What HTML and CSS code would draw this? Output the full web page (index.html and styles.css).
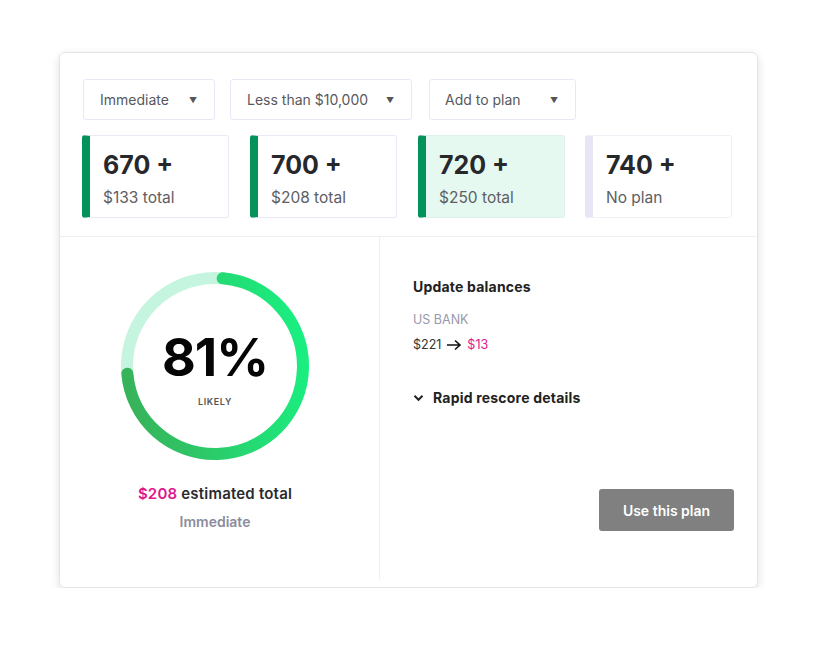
FILE: index.html
```html
<!DOCTYPE html>
<html lang="en">
<head>
	<meta charset="UTF-8">
	<title>Plan</title>
	<link rel="stylesheet" href="styles.css">
</head>
<body>
	<div class="card">
		<div class="top">
			<div class="filters">
				<div class="select select-time">Immediate <span class="caret">&#9660;</span></div>
				<div class="select select-amount">Less than $10,000 <span class="caret">&#9660;</span></div>
				<div class="select select-plan">Add to plan <span class="caret">&#9660;</span></div>
			</div>
			<div class="scores">
				<div class="score">
					<div class="score-num">670 +</div>
					<div class="score-sub">$133 total</div>
				</div>
				<div class="score">
					<div class="score-num">700 +</div>
					<div class="score-sub">$208 total</div>
				</div>
				<div class="score score-active">
					<div class="score-num">720 +</div>
					<div class="score-sub">$250 total</div>
				</div>
				<div class="score score-none">
					<div class="score-num">740 +</div>
					<div class="score-sub">No plan</div>
				</div>
			</div>
		</div>
		<div class="bottom">
			<div class="left">
				<div class="gauge">
					<svg width="190" height="190" viewBox="0 0 190 190">
						<defs>
							<linearGradient id="g" x1="0" y1="0.6" x2="1" y2="0.4">
								<stop offset="0" stop-color="#37b35a"/>
								<stop offset="0.55" stop-color="#26d671"/>
								<stop offset="1" stop-color="#1aee80"/>
							</linearGradient>
						</defs>
						<circle cx="95" cy="95" r="88" fill="none" stroke="#c5f4df" stroke-width="12"/>
						<path d="M102.67 7.33 A88 88 0 1 1 7.33 102.67" fill="none" stroke="url(#g)" stroke-width="12" stroke-linecap="round"/>
					</svg>
					<div class="gauge-text">
						<div class="pct">81%</div>
						<div class="likely">LIKELY</div>
					</div>
				</div>
				<div class="estimate"><span class="pink">$208</span> estimated total</div>
				<div class="timing">Immediate</div>
			</div>
			<div class="right">
				<div class="title">Update balances</div>
				<div class="bank">US BANK</div>
				<div class="change">$221
					<svg class="arrow" width="16" height="12" viewBox="0 0 16 12"><path d="M1 6h13M9 1.5L14 6l-5 4.5" fill="none" stroke="#111" stroke-width="1.6"/></svg>
					<span class="pink">$13</span></div>
				<div class="details">
					<svg width="11" height="8" viewBox="0 0 11 8"><path d="M1.5 1.8l4 4 4-4" fill="none" stroke="#222" stroke-width="2"/></svg>
					Rapid rescore details
				</div>
				<div class="actions">
					<div class="btn">Use this plan</div>
				</div>
			</div>
		</div>
	</div>
</body>
</html>
```
FILE: styles.css
```css
* {
	margin: 0;
	padding: 0;
	box-sizing: border-box;
}

body {
	background: #fff;
	font-family: Inter, "Noto Sans", sans-serif;
	color: #2a2a2e;
}

.card {
	margin: 52px 0 0 59px;
	width: 699px;
	height: 536px;
	border: 1px solid #e4e4e6;
	border-radius: 6px;
	box-shadow: 0 3px 10px rgba(0, 0, 0, .12);
	display: flex;
	flex-direction: column;
}

.top {
	padding: 26px 24px 18px 22px;
	border-bottom: 1px solid #efeef5;
}

.filters {
	display: flex;
	gap: 15px;
	padding-left: 1px;
}

.select {
	height: 41px;
	border: 1px solid #e8e6f7;
	border-radius: 3px;
	display: flex;
	align-items: center;
	justify-content: space-between;
	padding: 0 17px 0 16px;
	font-size: 14px;
	color: #58585e;
}

.select-time { width: 132px; }
.select-amount { width: 182px; margin-right: 2px; }
.select-plan { width: 147px; padding-left: 15px; }

.caret {
	font-size: 8px;
	color: #555;
}

.scores {
	display: flex;
	gap: 21px;
	margin-top: 15px;
}

.score {
	width: 147px;
	height: 83px;
	border: 1px solid #ebe9f6;
	border-left: 8px solid #03925a;
	border-radius: 3px;
	padding: 13px 0 0 13px;
}

.score-active {
	background: #e5f9f0;
	border-color: #dff2ea;
	border-left-color: #03925a;
}

.score-none {
	border-color: #f1f0f7;
	border-left-color: #e7e6f5;
	margin-left: -1px;
}

.score-num {
	font-size: 25px;
	font-weight: 700;
	color: #27282b;
	line-height: 32px;
}

.score-sub {
	font-size: 15.5px;
	color: #5e5e63;
	margin-top: 6px;
	line-height: 22px;
}

.bottom {
	flex: 1;
	display: flex;
	padding-bottom: 8px;
}

.left {
	width: 320px;
	border-right: 1px solid #efeef5;
	padding-right: 9px;
	display: flex;
	flex-direction: column;
	align-items: center;
}

.gauge {
	position: relative;
	width: 190px;
	height: 190px;
	margin-top: 34px;
}

.gauge svg {
	display: block;
}

.gauge-text {
	position: absolute;
	inset: 0;
	display: flex;
	flex-direction: column;
	align-items: center;
	justify-content: center;
}

.pct {
	font-size: 52px;
	font-weight: 700;
	color: #050505;
	letter-spacing: -1px;
	line-height: 60px;
	margin-top: 2px;
}

.likely {
	font-size: 9px;
	font-weight: 600;
	color: #555;
	letter-spacing: .6px;
	margin-top: 8px;
}

.estimate {
	margin-top: 23px;
	font-size: 15px;
	font-weight: 600;
	color: #2a2a2e;
	letter-spacing: .2px;
}

.pink {
	color: #e0168c;
}

.timing {
	margin-top: 10px;
	font-size: 14px;
	font-weight: 600;
	color: #8d8c9e;
}

.right {
	flex: 1;
	padding: 41px 23px 0 33px;
	display: flex;
	flex-direction: column;
}

.title {
	font-size: 14px;
	font-weight: 700;
	color: #222;
	letter-spacing: .2px;
}

.bank {
	margin-top: 17px;
	font-size: 12.5px;
	color: #9898ad;
}

.change {
	margin-top: 10px;
	font-size: 12.5px;
	color: #333;
	display: flex;
	align-items: center;
	gap: 5px;
}

.details {
	margin-top: 37px;
	font-size: 14px;
	font-weight: 700;
	color: #222;
	display: flex;
	align-items: center;
	gap: 9px;
	letter-spacing: .2px;
}

.actions {
	margin-top: auto;
	margin-bottom: 48px;
	display: flex;
	justify-content: flex-end;
}

.btn {
	width: 135px;
	height: 42px;
	background: #808080;
	border-radius: 3px;
	color: #fff;
	font-size: 14px;
	font-weight: 600;
	display: flex;
	align-items: center;
	justify-content: center;
}
```
